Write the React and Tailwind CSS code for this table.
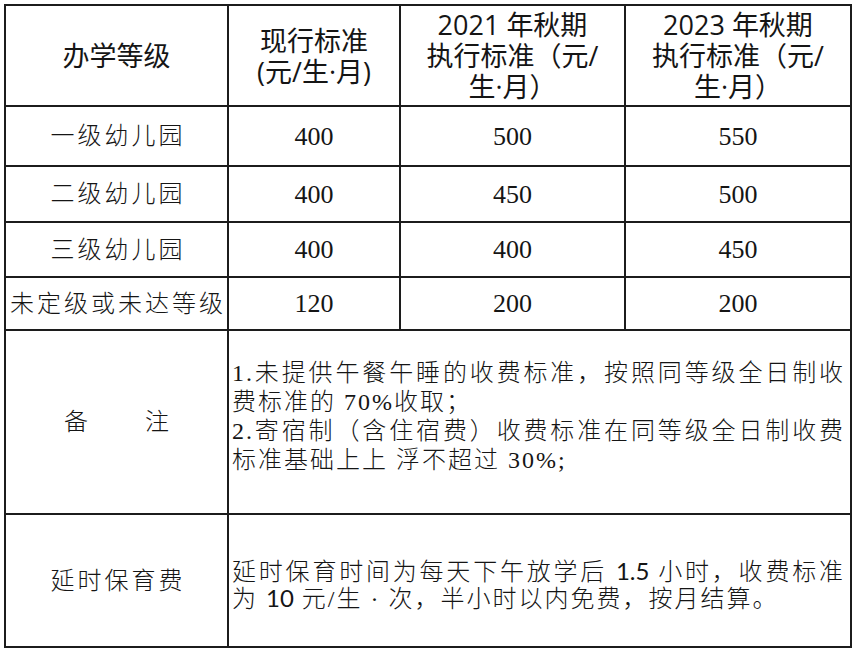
import React from "react";

const rows = [
  { name: "一级幼儿园", a: "400", b: "500", c: "550" },
  { name: "二级幼儿园", a: "400", b: "450", c: "500" },
  { name: "三级幼儿园", a: "400", b: "400", c: "450" },
  { name: "未定级或未达等级", a: "120", b: "200", c: "200" },
];

const rowHeights = ["h-[58px]", "h-[54px]", "h-[53px]", "h-[51px]"];

const Cell = ({ className = "", children }) => (
  <div className={`bg-white flex items-center justify-center text-[#151515] ${className}`}>
    {children}
  </div>
);

// 整行两端对齐
const Full = ({ children }) => (
  <div className="text-justify [text-align-last:justify]">{children}</div>
);

// 数字用西文字体
const Num = ({ children }) => <span className="font-normal">{children}</span>;
const Calibri = ({ children }) => (
  <span className="font-['Lato','Noto_Sans_CJK_SC',sans-serif] font-normal tracking-normal">{children}</span>
);

const Head = ({ lines }) => (
  <Cell className="h-[99px] text-[27px] leading-[31px] text-center font-['Open_Sans','Noto_Sans_CJK_SC',sans-serif]">
    <div>
      {lines.map((l) => (
        <div key={l}>{l}</div>
      ))}
    </div>
  </Cell>
);

export default function App() {
  return (
    <div className="w-[856px] h-[653px] bg-white pt-[4px] pl-[4px] font-['Liberation_Serif','Noto_Sans_CJK_SC',serif]">
      <div className="w-[848px] bg-[#1c1c1c] p-[2px] grid grid-cols-[221px_170px_223px_224px] gap-[2px]">
        {/* 表头 */}
        <Head lines={["办学等级"]} />
        <Head lines={["现行标准", "(元/生·月)"]} />
        <Head lines={["2021 年秋期", "执行标准（元/", "生·月）"]} />
        <Head lines={["2023 年秋期", "执行标准（元/", "生·月）"]} />

        {/* 各等级 */}
        {rows.map((r, i) => (
          <React.Fragment key={r.name}>
            <Cell className={`${rowHeights[i]} text-[24px] font-light tracking-[3px] pl-[3px]`}>{r.name}</Cell>
            <Cell className={`${rowHeights[i]} text-[26px]`}>{r.a}</Cell>
            <Cell className={`${rowHeights[i]} text-[26px]`}>{r.b}</Cell>
            <Cell className={`${rowHeights[i]} text-[26px]`}>{r.c}</Cell>
          </React.Fragment>
        ))}

        {/* 备注 */}
        <Cell className="h-[182px] text-[24px] font-light gap-[57px]">
          <span>备</span>
          <span>注</span>
        </Cell>
        <div className="col-span-3 bg-white h-[182px] flex flex-col justify-center pl-[3px] pr-[5px] pb-[11px] text-[24px] leading-[29px] font-light tracking-[2px] text-[#151515]">
          <Full>
            <Num>1.</Num>未提供午餐午睡的收费标准，按照同等级全日制收
          </Full>
          <div>
            费标准的 <Num>70%</Num>收取；
          </div>
          <Full>
            <Num>2.</Num>寄宿制（含住宿费）收费标准在同等级全日制收费
          </Full>
          <div>
            标准基础上上 浮不超过 <Num>30%;</Num>
          </div>
        </div>

        {/* 延时保育费 */}
        <Cell className="h-[131px] text-[24px] font-light tracking-[3px] pl-[3px]">延时保育费</Cell>
        <div className="col-span-3 bg-white h-[131px] flex flex-col justify-center pl-[3px] pr-[5px] pt-[9px] text-[24px] leading-[26px] font-light tracking-[2px] text-[#151515]">
          <Full>
            延时保育时间为每天下午放学后 <Calibri>1.5</Calibri> 小时，收费标准
          </Full>
          <div>
            为 <Calibri>10</Calibri> 元/生 · 次，半小时以内免费，按月结算。
          </div>
        </div>
      </div>
    </div>
  );
}
